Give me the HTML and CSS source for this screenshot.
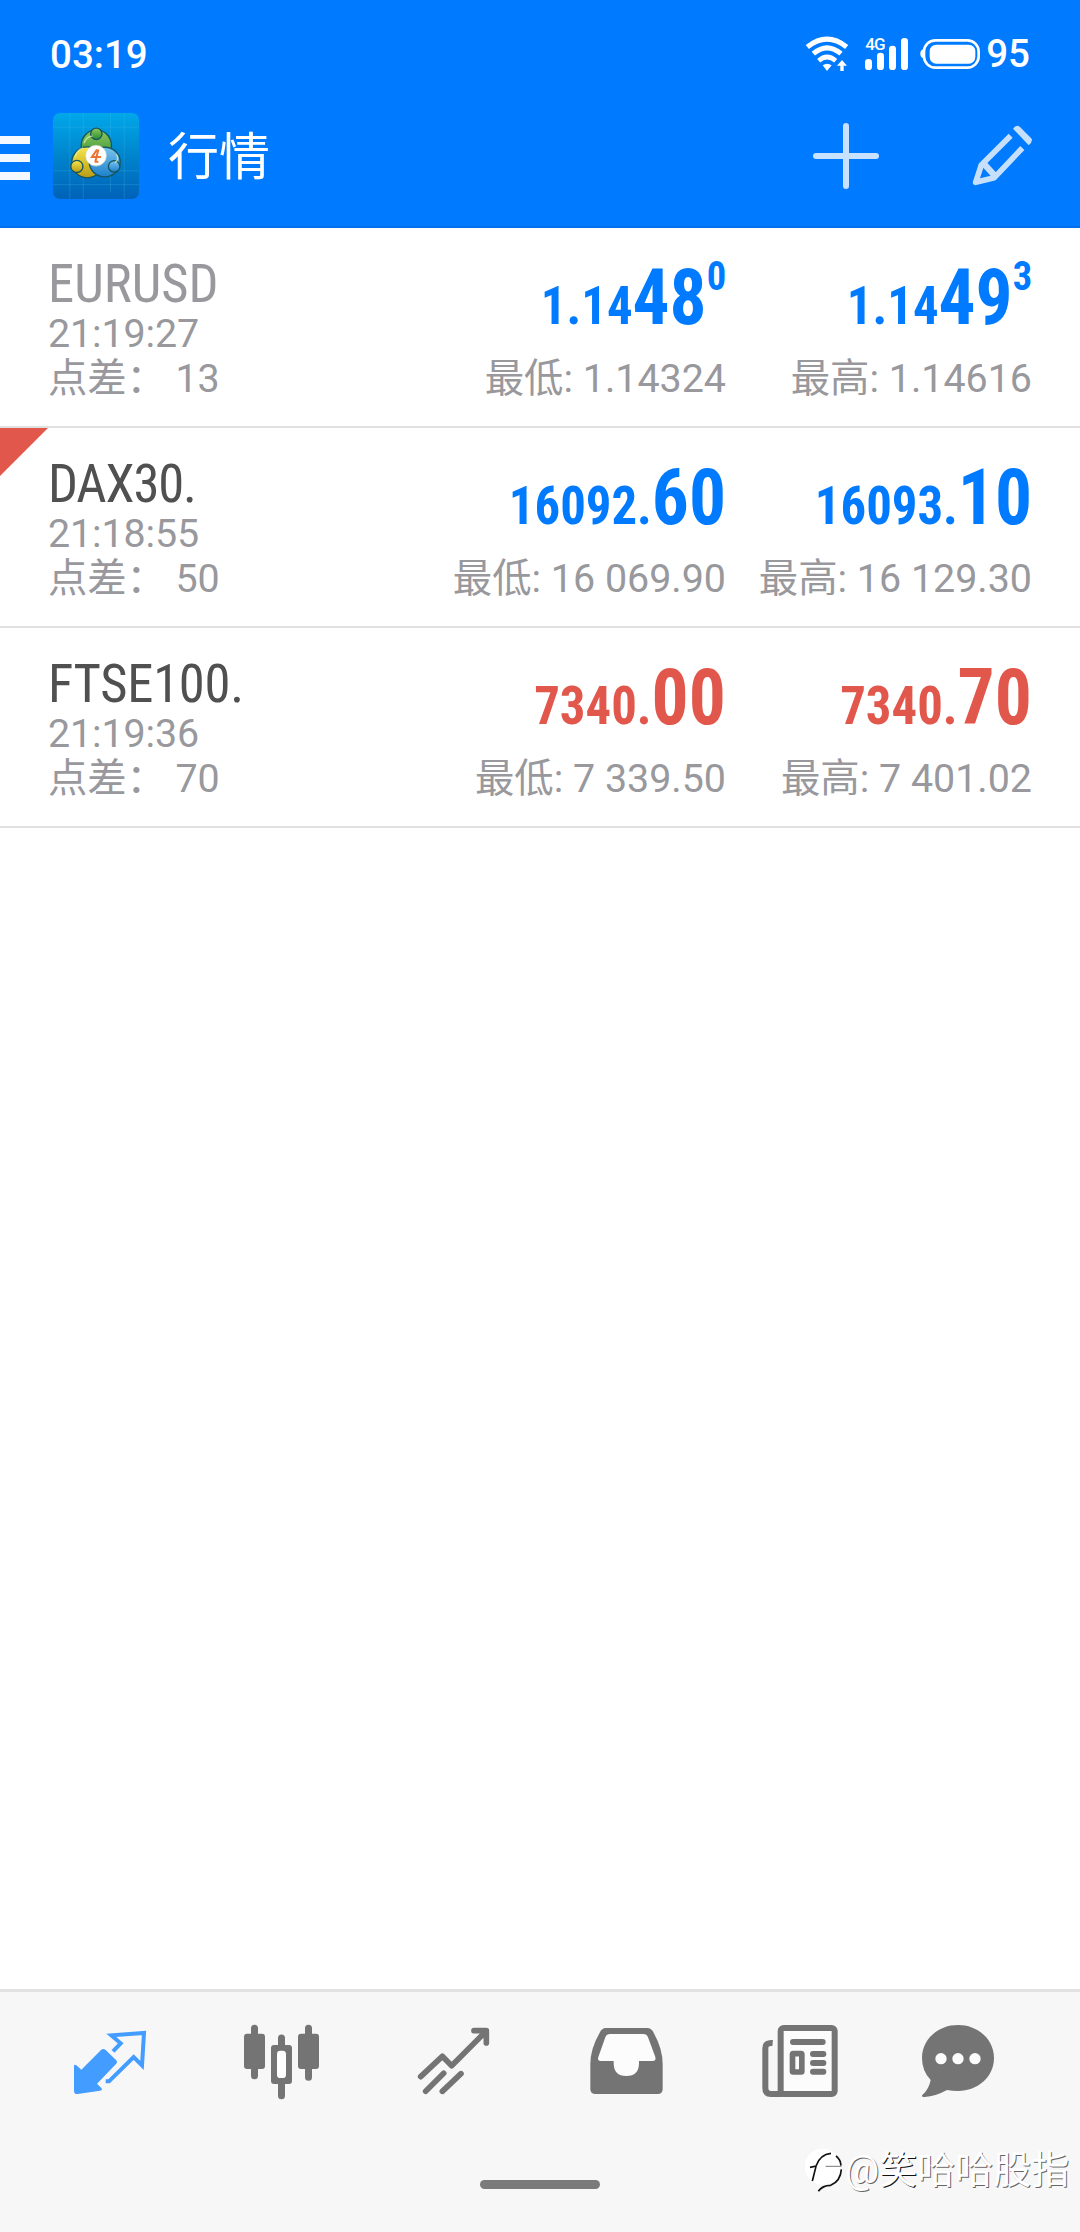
FILE: index.html
```html
<!DOCTYPE html>
<html lang="zh-CN">
<head>
<meta charset="utf-8">
<title>行情</title>
<link rel="stylesheet" href="styles.css">
</head>
<body>
<div class="screen">
  <header class="header">
    <div class="status">
      <span class="clock">03:19</span>
      <div class="indicators">
        <svg class="wifi" viewBox="135 105 135 112" fill="none" stroke="#fff">
          <path d="M142 141Q201 94 260 141" stroke-width="15"/>
          <path d="M160 161Q201 126 243 161" stroke-width="15"/>
          <path d="M176 182Q201 160 227 182" stroke-width="14"/>
          <path d="M188 196Q201 187 215 196L201 213Z" fill="#fff" stroke="none"/>
          <path d="M246 180L261 197H251V213H241V197H231Z" fill="#fff" stroke="none"/>
        </svg>
        <div class="cell">
          <span class="net">4G</span>
          <svg class="bars" viewBox="312 108 138 108" fill="#fff">
            <rect x="315" y="177" width="21" height="33" rx="10"/>
            <rect x="351" y="158" width="21" height="52" rx="10"/>
            <rect x="387" y="137" width="21" height="73" rx="10"/>
            <rect x="423" y="114" width="21" height="96" rx="10"/>
          </svg>
        </div>
        <svg class="battery" viewBox="480 114 183 96">
          <path d="M489 148Q481 151 481 161Q481 171 489 174Z" fill="#fff"/>
          <rect x="492" y="121" width="164" height="82" rx="34" fill="none" stroke="#fff" stroke-width="8"/>
          <rect x="509" y="134" width="137" height="57" rx="20" fill="#fff"/>
        </svg>
        <span class="level">95</span>
      </div>
    </div>
    <div class="toolbar">
      <div class="menu"><i></i><i></i><i></i></div>
      <svg class="logo" viewBox="160 340 256 256">
        <defs>
          <linearGradient id="sky" x1="0" y1="0" x2="0" y2="1"><stop offset="0" stop-color="#00a8ea"/><stop offset=".5" stop-color="#0084cc"/><stop offset="1" stop-color="#0062b8"/></linearGradient>
          <linearGradient id="green" x1="0" y1="0" x2="0" y2="1"><stop offset="0" stop-color="#91c95b"/><stop offset="1" stop-color="#278b35"/></linearGradient>
          <linearGradient id="gold" x1="0" y1="0" x2="0" y2="1"><stop offset="0" stop-color="#f6e64a"/><stop offset="1" stop-color="#b99b16"/></linearGradient>
          <linearGradient id="blue" x1="0" y1="0" x2="0" y2="1"><stop offset="0" stop-color="#79c5ef"/><stop offset="1" stop-color="#1d80cc"/></linearGradient>
        </defs>
        <rect x="160" y="340" width="256" height="256" rx="20" fill="url(#sky)"/>
        <path d="M160 382H416M160 512H416M160 553H416M210 340V596M250 340V596M331 340V576M372 340V596" stroke="#4bc4ee" stroke-opacity=".35" stroke-width="2"/>
        <g stroke="#17565f" stroke-width="4">
          <ellipse cx="289" cy="437" rx="45" ry="47" fill="url(#green)"/>
          <ellipse cx="262" cy="487" rx="46" ry="46" fill="url(#gold)"/>
          <ellipse cx="314" cy="486" rx="46" ry="44" fill="url(#blue)"/>
          <circle cx="289" cy="402" r="17" fill="url(#green)"/>
          <circle cx="231" cy="499" r="18" fill="url(#gold)"/>
          <circle cx="342" cy="499" r="17" fill="url(#blue)"/>
        </g>
        <path d="M252 430Q261 408 278 409M225 472Q232 449 250 444M349 463Q358 481 344 487" fill="none" stroke="#e6f5b5" stroke-opacity=".7" stroke-width="4"/>
        <circle cx="288" cy="467" r="31" fill="#fff" stroke="#cbd4cb" stroke-width="2"/>
        <path d="M291 449L276 471H303M295 449L286 485M284 485H295" fill="none" stroke="#ee7434" stroke-width="6"/>
      </svg>
      <h1 class="title">行情</h1>
      <svg class="plus" viewBox="159 369 198 198"><path d="M258 378V558M168 468H348" stroke="#c6e2ff" stroke-width="18" stroke-linecap="round"/></svg>
      <svg class="pencil" viewBox="636 375 183 183" fill="none" stroke="#c6e0fb" stroke-width="17">
        <path d="M752 407L664 495L647 547L703 533L787 444" stroke-linejoin="round"/>
        <path d="M668 487L706 529" stroke-width="19"/>
        <path d="M759 386Q769 372 780 381L815 416Q819 425 806 436Z" fill="#c6e0fb" stroke="none"/>
      </svg>
    </div>
  </header>

  <main class="quotes">
    <section class="quote up">
      <div class="info"><div class="symbol muted">EURUSD</div><div>21:19:27</div><div>点差： 13</div></div>
      <div class="side"><div class="price"><span class="deal"><small>1.14</small><b>48</b><sup>0</sup></span></div><div>最低: 1.14324</div></div>
      <div class="side"><div class="price"><span class="deal"><small>1.14</small><b>49</b><sup>3</sup></span></div><div>最高: 1.14616</div></div>
    </section>
    <section class="quote up flagged">
      <div class="info"><div class="symbol tight">DAX30.</div><div>21:18:55</div><div>点差： 50</div></div>
      <div class="side"><div class="price"><span class="deal"><small>16092.</small><b>60</b></span></div><div>最低: 16 069.90</div></div>
      <div class="side"><div class="price"><span class="deal"><small>16093.</small><b>10</b></span></div><div>最高: 16 129.30</div></div>
    </section>
    <section class="quote down">
      <div class="info"><div class="symbol snug">FTSE100.</div><div>21:19:36</div><div>点差： 70</div></div>
      <div class="side"><div class="price"><span class="deal"><small>7340.</small><b>00</b></span></div><div>最低: 7 339.50</div></div>
      <div class="side"><div class="price"><span class="deal"><small>7340.</small><b>70</b></span></div><div>最高: 7 401.02</div></div>
    </section>
  </main>

  <footer class="footer">
    <nav class="tabs">
      <svg class="active" viewBox="-48 36 516 360">
        <path d="M102 258Q102 251 109 256L124 269L183 210Q190 204 197 210L228 240Q234 246 228 252L171 311L184 324Q189 331 180 332L113 342Q102 343 102 332Z" fill="currentColor"/>
        <path d="M219 214L242 190L214 166L312 159L306 256L281 231L207 304H197" fill="none" stroke="currentColor" stroke-width="12"/>
      </svg>
      <svg viewBox="468 36 516 360">
        <g fill="currentColor"><rect x="612" y="161" width="63" height="106" rx="9"/><rect x="774" y="161" width="63" height="106" rx="9"/></g>
        <path d="M643.500 145V287M805.500 145V292M724.500 174V200M724.500 306V347" stroke="currentColor" stroke-width="21" stroke-linecap="round"/>
        <rect x="693" y="195" width="63" height="117" rx="9" fill="currentColor"/><rect x="711" y="212" width="27" height="82" rx="10" fill="#fff"/>
      </svg>
      <svg viewBox="-66 36 516 360" fill="none" stroke="currentColor" stroke-width="17" stroke-linecap="round" stroke-linejoin="round">
        <path d="M92 290L157 229L185 257L288 154M252 152H289V189"/>
        <path d="M107 334L161 280M157 334L213 281"/>
      </svg>
      <svg viewBox="450 36 516 360">
        <path d="M647 144H772Q784 144 791 158Q818 207 818 252V327Q818 342 803 342H617Q601 342 601 327V252Q601 207 629 158Q636 144 647 144Z" fill="currentColor"/>
        <path d="M660 162H760Q770 162 774 172L796 231Q799 243 788 243H747V250Q747 288 709 288Q671 288 671 250V243H633Q621 243 625 231L646 172Q650 162 660 162Z" fill="#fcfcfc"/>
      </svg>
      <svg viewBox="-54 36 516 360" fill="none" stroke="currentColor" stroke-width="18">
        <path d="M128 189Q106 187 106 205V324Q106 342 123 342H158"/>
        <rect x="152" y="144" width="162" height="198" rx="9" fill="#fcfcfc"/>
        <path d="M189 186H278M249 222H280M249 249H280M249 275H280" stroke-linecap="round"/>
        <rect x="187.500" y="221" width="28" height="55" rx="2" stroke-width="17" fill="#fcfcfc"/>
      </svg>
      <svg viewBox="462 36 516 360">
        <path d="M684 135C745 135 792 179 792 234C792 290 744 333 684 333Q667 333 651 330Q617 349 584 351Q573 352 577 345Q597 328 602 300Q576 273 576 234C576 179 623 135 684 135Z" fill="currentColor"/>
        <g fill="#fcfcfc"><circle cx="633" cy="236" r="17"/><circle cx="684" cy="236" r="17"/><circle cx="735" cy="236" r="17"/></g>
      </svg>
    </nav>
    <div class="home-bar"></div>
    <div class="watermark">
      <svg viewBox="225 510 120 138">
        <circle cx="278" cy="569" r="54" fill="#fff"/>
        <path d="M240 571L258 567Q270 532 303 529M258 568L247 612M318 537Q332 548 333 566M334 577Q332 612 302 625Q277 625 265 643" fill="none" stroke="#111" stroke-width="5"/>
        <path d="M287 568H334" stroke="#777" stroke-width="3"/>
      </svg>
      <span>@<b>笑</b>哈哈股指</span>
    </div>
  </footer>
</div>
</body>
</html>
```
FILE: styles.css
```css
* { box-sizing: border-box; }

body {
  margin: 0;
  background: #fff;
  font-family: Roboto, "Noto Sans CJK SC", sans-serif;
}

.screen {
  width: 1080px;
  height: 2232px;
  display: flex;
  flex-direction: column;
}

svg { display: block; flex: none; }

.header {
  height: 228px;
  background: #007aff;
  border-bottom: 2px solid #0070ea;
  color: #fff;
}

.status {
  height: 108px;
  padding: 0 50px 0 50px;
  display: flex;
  justify-content: space-between;
  font-size: 38.5px;
  font-weight: 500;
  line-height: 44px;
}

.clock { margin-top: 33px; }
.indicators { display: flex; }
.wifi { width: 45px; height: 37.330px; margin: 35px 14px 0 0; }
.cell { position: relative; margin: 36px 10px 0 0; }
.net { position: absolute; left: 1px; top: 1px; font-size: 17px; line-height: 15px; letter-spacing: -1px; }
.bars { width: 46px; height: 36px; }
.battery { width: 61px; height: 32px; margin: 38px 5px 0 0; }
.level { margin-top: 32px; }

.toolbar {
  height: 118px;
  display: flex;
  align-items: flex-start;
}

.menu {
  width: 30px;
  margin: 28px 23px 0 0;
  display: flex;
  flex-direction: column;
  gap: 10px;
}

.menu i { height: 8px; background: #f4f9ff; }
.logo { width: 86px; height: 86px; margin-top: 5px; }
.title { margin: 19px auto 0 29px; font-size: 51px; font-weight: 400; line-height: 62px; }
.plus { width: 66px; height: 66px; margin: 15px 93px 0 0; }
.pencil { width: 61px; height: 61px; margin: 17px 47px 0 0; }

.quotes { flex: 1; }

.quote {
  position: relative;
  height: 200px;
  padding: 28px 48px 0;
  border-bottom: 2px solid #e0e0e0;
  display: grid;
  grid-template-columns: 1fr 306px 306px;
  font-size: 39.4px;
  line-height: 45px;
  color: #98989d;
}

.flagged::before {
  content: "";
  position: absolute;
  left: 0;
  top: 0;
  width: 48px;
  height: 48px;
  background: #e2574c;
  clip-path: polygon(0 0, 100% 0, 0 100%);
}

.info { letter-spacing: -.1px; }

.symbol {
  width: max-content;
  font-family: "Roboto Condensed", Roboto, sans-serif;
  font-stretch: 75%;
  font-size: 54px;
  line-height: 55px;
  letter-spacing: 0;
  color: #505050;
  transform: scaleX(.975);
  transform-origin: left;
}

.symbol.muted { color: #98989d; }
.symbol.tight { letter-spacing: -1.200px; }
.symbol.snug { letter-spacing: -.3px; }
.side { text-align: right; white-space: nowrap; }
.price {
  height: 100px;
  font-family: "Roboto Condensed", Roboto, sans-serif;
  font-stretch: 75%;
  font-size: 78px;
  font-weight: 700;
  line-height: 83px;
}

.deal {
  display: inline-block;
  transform: scaleX(.94);
  transform-origin: right;
}

.deal small { font-size: 54px; line-height: 0; }
.deal b { font-weight: 700; }
.deal sup { font-size: 41px; line-height: 0; vertical-align: 34px; }
.up .price { color: #007aff; }
.down .price { color: #e2574c; }

.footer {
  position: relative;
  height: 243px;
  background: #f7f7f7;
  border-top: 3px solid #e2e2e2;
}

.tabs { display: flex; padding: 0 24px; color: #747474; }
.tabs svg { width: 172px; height: 120px; }
.tabs .active { color: #439cff; }
.home-bar { width: 120px; height: 9px; margin: 68px auto 0; border-radius: 5px; background: #7b7b7b; }

.watermark {
  position: absolute;
  left: 805px;
  top: 155px;
  display: flex;
  font-size: 38px;
  line-height: 46px;
  color: #fff;
  text-shadow: 1px 1px 0 #666;
  white-space: nowrap;
}

.watermark b { font-weight: 400; text-shadow: 1px 1px 0 #111; }
.watermark svg { width: 40px; height: 46px; }
```
